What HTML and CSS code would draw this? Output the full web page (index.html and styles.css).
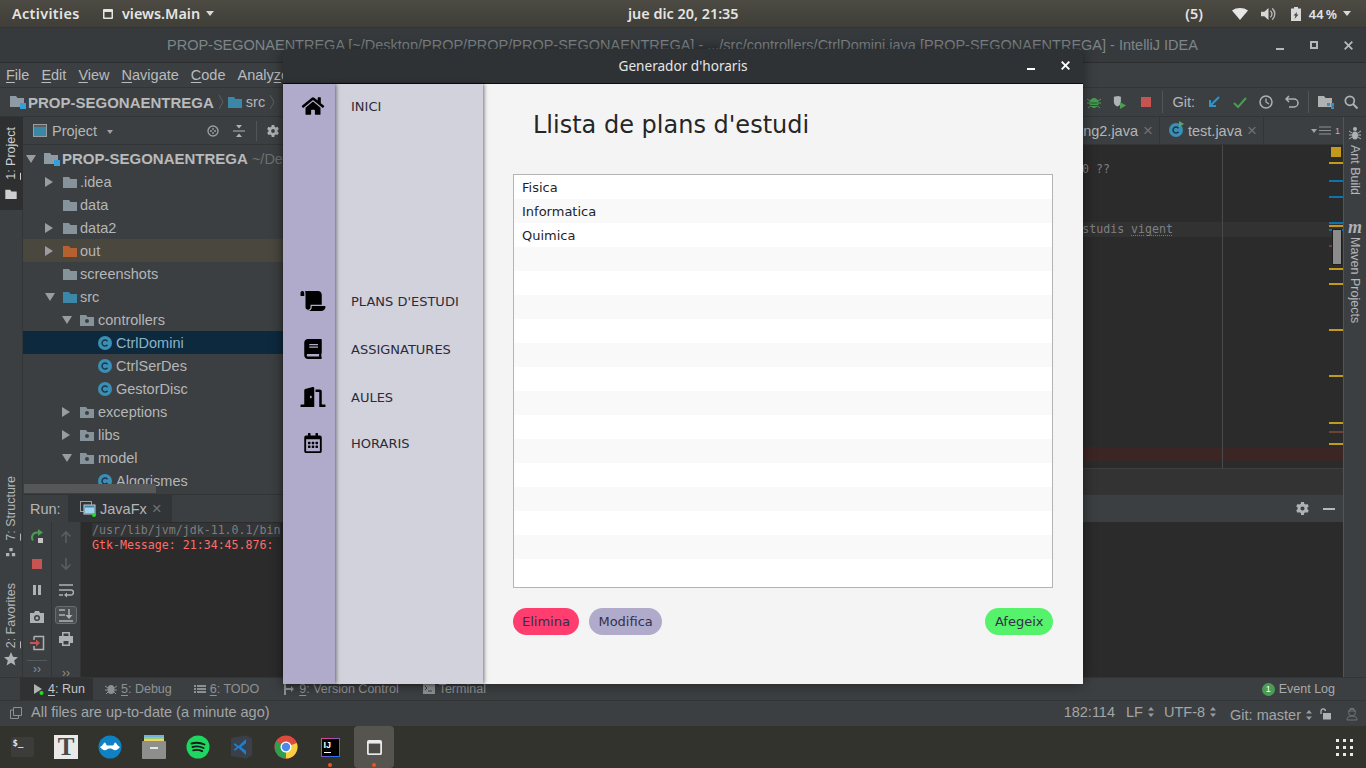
FILE: index.html
```html
<!DOCTYPE html>
<html lang="en">
<head>
	<meta charset="UTF-8">
	<title>Generador d'horaris</title>
	<link rel="stylesheet" href="styles.css">
</head>
<body>
<svg class="defs" width="0" height="0">
	<symbol id="folder" viewBox="0 0 14 12"><path d="M0 1h6l1.500 2H14v9H0z"/></symbol>
	<symbol id="pkg" viewBox="0 0 14 12"><path fill-rule="evenodd" d="M0 1h6l1.500 2H14v9H0zM7 5a2 2 0 1 0 0 4a2 2 0 0 0 0-4z"/></symbol>
	<symbol id="cls" viewBox="0 0 14 14"><circle cx="7" cy="7" r="7" fill="#3b8fb5"/><path d="M9.500 5.300A3 3 0 1 0 9.500 8.700" fill="none" stroke="#16384a" stroke-width="1.500"/></symbol>
	<symbol id="gear" viewBox="0 0 14 14"><path fill-rule="evenodd" d="M5.500 0h3l.4 2 1.500.8 1.900-.7 1.500 2.600-1.500 1.300v1.800l1.500 1.300-1.500 2.600-1.900-.7-1.500.8-.4 2.200h-3l-.4-2.200-1.500-.8-1.900.7L.2 9.100l1.500-1.300V6L.2 4.700l1.500-2.600 1.900.7 1.500-.8zM7 4.800a2.200 2.200 0 1 0 0 4.400a2.200 2.200 0 0 0 0-4.400z"/></symbol>
	<symbol id="updown" viewBox="0 0 6 10"><path d="M3 0l3 3.500H0zM3 10L0 6.500h6z"/></symbol>
</svg>

<div class="desktop">
	<header class="topbar">
		<div class="top-left">
			<span class="activities">Activities</span>
			<svg class="top-win" viewBox="0 0 10 10"><path fill-rule="evenodd" d="M1 0h8a1 1 0 0 1 1 1v8a1 1 0 0 1-1 1H1a1 1 0 0 1-1-1V1a1 1 0 0 1 1-1zM1.500 3v5.500h7V3z"/></svg>
			<span class="app-name">views.Main</span>
			<span class="caret"></span>
		</div>
		<div class="clock">jue dic 20, 21:35</div>
		<div class="top-right">
			<span class="notif">(5)</span>
			<svg class="wifi" viewBox="0 0 16 12"><path d="M0 2.500C4.500-.8 11.500-.8 16 2.500L8 12z"/></svg>
			<svg class="vol" viewBox="0 0 16 14"><path d="M0 4.500h3.500L8 .5v13l-4.500-4H0z"/><path d="M10 3.500a4.500 4.500 0 0 1 0 7M12 1a8 8 0 0 1 0 12" fill="none" stroke="#e6e6e6" stroke-width="1.500" opacity=".7"/></svg>
			<svg class="batt" viewBox="0 0 10 14"><path fill-rule="evenodd" d="M3 0h4v1.500h3V14H0V1.500h3zM6 5L2.500 8.500h2L3.500 12 7.500 7.500h-2z"/></svg>
			<span class="percent">44 %</span>
			<span class="caret"></span>
		</div>
	</header>

	<div class="ide">
		<div class="ide-title">PROP-SEGONAENTREGA [~/Desktop/PROP/PROP/PROP-SEGONAENTREGA] - .../src/controllers/CtrlDomini.java [PROP-SEGONAENTREGA] - IntelliJ IDEA
			<div class="win-btns">
				<span class="wb-min"></span>
				<span class="wb-max"></span>
				<svg class="wb-close" viewBox="0 0 9 9"><path d="M.7.7l7.600 7.600M8.300.7L.7 8.300" stroke="#b5b8ba" stroke-width="1.800"/></svg>
			</div>
		</div>

		<nav class="menubar">
			<span><u>F</u>ile</span><span><u>E</u>dit</span><span><u>V</u>iew</span><span><u>N</u>avigate</span><span><u>C</u>ode</span><span>Analy<u>z</u>e</span>
		</nav>

		<div class="navbar">
			<svg class="nav-folder" viewBox="0 0 16 14"><use href="#folder" width="14" height="12" fill="#8f9ba3"/><rect x="10" y="8" width="6" height="6" fill="#389fd6"/></svg>
			<b class="crumb-root">PROP-SEGONAENTREGA</b>
			<svg class="chev" viewBox="0 0 6 16"><path d="M1 1l4 7-4 7" fill="none" stroke="#5c5f61"/></svg>
			<svg class="nav-src" viewBox="0 0 14 12"><use href="#folder" fill="#3b87a8"/></svg>
			<span class="crumb">src</span>
			<svg class="chev" viewBox="0 0 6 16"><path d="M1 1l4 7-4 7" fill="none" stroke="#5c5f61"/></svg>
			<div class="nav-tools">
				<svg viewBox="0 0 14 14"><ellipse cx="7" cy="8" rx="4.500" ry="5" fill="#499c54"/><path d="M0 4l3 2M14 4l-3 2M0 8h3M14 8h-3M1 13l2.500-2M13 13l-2.500-2" stroke="#499c54"/><path d="M3.500 8h7M3.500 10.500h7" stroke="#2f4f34"/></svg>
				<svg viewBox="0 0 16 16"><path d="M1 2l5-1 3 1v6c0 3-3 5-4 5s-4-2-4-5z" fill="#b0b2b4"/><path d="M8 8l7 4-7 4z" fill="#499c54"/></svg>
				<svg viewBox="0 0 14 14"><rect x="2" y="2" width="10" height="10" fill="#c75450"/></svg>
				<i class="tool-sep"></i>
				<span class="git-label">Git:</span>
				<svg viewBox="0 0 14 14"><path d="M12 2L3 11M3 5v6h6" fill="none" stroke="#3592c4" stroke-width="2"/></svg>
				<svg viewBox="0 0 14 14"><path d="M1 8l4 4 8-9" fill="none" stroke="#499c54" stroke-width="2"/></svg>
				<svg viewBox="0 0 14 14"><circle cx="7" cy="7" r="6" fill="none" stroke="#afb1b3" stroke-width="1.500"/><path d="M7 3.500V7l3 2" fill="none" stroke="#afb1b3" stroke-width="1.300"/></svg>
				<svg viewBox="0 0 14 14"><path d="M4 1L1 4l3 3M1 4h8a4 4 0 0 1 0 8H4" fill="none" stroke="#afb1b3" stroke-width="1.500"/></svg>
				<i class="tool-sep"></i>
				<svg class="tool-wide" viewBox="0 0 16 14"><use href="#folder" width="14" height="12" fill="#afb1b3"/><path d="M9 8h3v3H9zM13 8h3v3h-3zM13 11.500h3V14h-3z" fill="#3592c4"/></svg>
				<svg viewBox="0 0 14 14"><circle cx="5.800" cy="5.800" r="4.500" fill="none" stroke="#afb1b3" stroke-width="1.700"/><path d="M9 9l4.500 4.500" stroke="#afb1b3" stroke-width="2"/></svg>
			</div>
		</div>

		<div class="ide-main">
			<aside class="strip strip-left">
				<div class="side-tab active">
					<span class="vtext"><u>1</u>: Project</span>
					<svg class="side-ico" viewBox="0 0 14 12"><use href="#folder" fill="#cfcfcf"/></svg>
				</div>
				<div class="side-bottom">
					<div class="side-tab tab-structure">
						<span class="vtext"><u>7</u>: Structure</span>
						<svg class="side-ico" viewBox="0 0 12 12"><path d="M4 0h4v4H4zM0 6h4v4H0zM7 6h4v4H7z" fill="#afb1b3"/></svg>
					</div>
					<div class="side-tab tab-fav">
						<span class="vtext"><u>2</u>: Favorites</span>
						<svg class="side-star" viewBox="0 0 14 14"><path d="M7 0l2 4.800 5 .4-3.800 3.300 1.200 5L7 10.800 2.600 13.500l1.200-5L0 5.200l5-.4z" fill="#afb1b3"/></svg>
					</div>
				</div>
			</aside>

			<div class="center">
				<div class="upper">
					<section class="project">
						<div class="project-head">
							<svg class="proj-ico" viewBox="0 0 14 13"><rect x=".5" y=".5" width="13" height="12" fill="#3b87a8" stroke="#9a9da0"/><path d="M1 1h12v2H1z" fill="#5a5d5f"/></svg>
							<span>Project</span>
							<span class="mini-caret"></span>
							<div class="project-tools">
								<svg viewBox="0 0 12 12"><circle cx="6" cy="6" r="5" fill="none" stroke="#9a9da0" stroke-width="1.400"/><path d="M6 3v2M6 7v2M3 6h2M7 6h2" stroke="#9a9da0" stroke-width="1.400"/></svg>
								<svg viewBox="0 0 12 12"><path d="M0 6h12" stroke="#afb1b3"/><path d="M3 0l3 3.500L9 0zM3 12l3-3.500L9 12zM1 2h10M1 10h10" fill="#afb1b3" stroke="none"/></svg>
								<i class="proj-sep"></i>
								<svg viewBox="0 0 14 14"><use href="#gear" fill="#afb1b3"/></svg>
							</div>
						</div>
						<div class="tree">
							<div class="row lv0"><i class="arrow down"></i><svg class="fld" viewBox="0 0 16 14"><use href="#folder" width="14" height="12" fill="#8f9ba3"/><rect x="10" y="8" width="6" height="6" fill="#389fd6"/></svg><b>PROP-SEGONAENTREGA</b><span class="dim">&nbsp;~/Desktop/PROP</span></div>
							<div class="row lv1"><i class="arrow"></i><svg class="fld" viewBox="0 0 14 12"><use href="#folder" fill="#87939a"/></svg><span>.idea</span></div>
							<div class="row lv1"><i class="arrow none"></i><svg class="fld" viewBox="0 0 14 12"><use href="#folder" fill="#87939a"/></svg><span>data</span></div>
							<div class="row lv1"><i class="arrow"></i><svg class="fld" viewBox="0 0 14 12"><use href="#folder" fill="#87939a"/></svg><span>data2</span></div>
							<div class="row lv1 excluded"><i class="arrow"></i><svg class="fld" viewBox="0 0 14 12"><use href="#folder" fill="#b4602f"/></svg><span>out</span></div>
							<div class="row lv1"><i class="arrow none"></i><svg class="fld" viewBox="0 0 14 12"><use href="#folder" fill="#87939a"/></svg><span>screenshots</span></div>
							<div class="row lv1"><i class="arrow down"></i><svg class="fld" viewBox="0 0 14 12"><use href="#folder" fill="#3b87a8"/></svg><span>src</span></div>
							<div class="row lv2"><i class="arrow down"></i><svg class="fld" viewBox="0 0 14 12"><use href="#pkg" fill="#87939a"/></svg><span>controllers</span></div>
							<div class="row lv3 selected"><i class="arrow none"></i><svg class="fld" viewBox="0 0 14 14"><use href="#cls"/></svg><span>CtrlDomini</span></div>
							<div class="row lv3"><i class="arrow none"></i><svg class="fld" viewBox="0 0 14 14"><use href="#cls"/></svg><span>CtrlSerDes</span></div>
							<div class="row lv3"><i class="arrow none"></i><svg class="fld" viewBox="0 0 14 14"><use href="#cls"/></svg><span>GestorDisc</span></div>
							<div class="row lv2"><i class="arrow"></i><svg class="fld" viewBox="0 0 14 12"><use href="#pkg" fill="#87939a"/></svg><span>exceptions</span></div>
							<div class="row lv2"><i class="arrow"></i><svg class="fld" viewBox="0 0 14 12"><use href="#pkg" fill="#87939a"/></svg><span>libs</span></div>
							<div class="row lv2"><i class="arrow down"></i><svg class="fld" viewBox="0 0 14 12"><use href="#pkg" fill="#87939a"/></svg><span>model</span></div>
							<div class="row lv3"><i class="arrow none"></i><svg class="fld" viewBox="0 0 14 14"><use href="#cls"/></svg><span>Algorismes</span></div>
						</div>
						<div class="tree-scroll"></div>
					</section>

					<section class="editor">
						<div class="tabs">
							<div class="tab tab-ng"><span>SerDesPlanning2.java</span><i class="tab-x">×</i></div>
							<div class="tab tab-test">
								<svg class="tab-ico" viewBox="0 0 16 16"><circle cx="7" cy="9" r="7" fill="#3b8fb5"/><path d="M9.500 7.300A3 3 0 1 0 9.500 10.700" fill="none" stroke="#16384a" stroke-width="1.500"/><path d="M10 0l5 3-5 3z" fill="#59a869"/></svg>
								<span>test.java</span><i class="tab-x">×</i>
							</div>
							<div class="tab-list">
								<span class="mini-caret"></span>
								<svg viewBox="0 0 12 9"><path d="M0 1h12M0 4.500h12M0 8h12" stroke="#8d8f91"/></svg>
								<small>1</small>
							</div>
						</div>
						<div class="code">
							<div class="line">return getPlaEstudis().size() == 0 ??</div>
							<div class="line current">// retorna el pla d'estudis <span class="typo">vigent</span></div>
							<div class="line error"></div>
							<div class="margin-line"></div>
							<div class="stripe">
								<i class="mark square"></i>
								<i class="mark y" style="top:17px"></i>
								<i class="mark b" style="top:35px"></i>
								<i class="mark b" style="top:51px"></i>
								<i class="mark b" style="top:77px"></i>
								<i class="mark y" style="top:80px"></i>
								<i class="mark b" style="top:84px"></i>
								<i class="mark br short" style="top:100px"></i>
								<i class="mark y" style="top:123px"></i>
								<i class="mark y" style="top:138px"></i>
								<i class="mark y" style="top:184px"></i>
								<i class="mark y" style="top:230px"></i>
								<i class="mark y" style="top:277px"></i>
								<i class="mark br" style="top:286px"></i>
								<i class="mark y" style="top:298px"></i>
								<i class="thumb"></i>
							</div>
						</div>
						<div class="editor-foot"></div>
					</section>
				</div>

				<section class="lower">
					<div class="run-head">
						<span class="run-label">Run:</span>
						<div class="run-tab">
							<svg class="run-tab-ico" viewBox="0 0 16 16"><rect x=".5" y=".5" width="11" height="10" fill="none" stroke="#9a9da0"/><rect x="4" y="4" width="11" height="9" fill="#3b87a8" stroke="#c8c8c8"/><rect x="5" y="6.500" width="9" height="5.500" fill="#9fd3ef"/><circle cx="14" cy="14" r="2" fill="#22e01d"/></svg>
							<span>JavaFx</span><i class="tab-x">×</i>
						</div>
						<div class="run-tools">
							<svg viewBox="0 0 14 14"><use href="#gear" fill="#afb1b3"/></svg>
							<i class="dash"></i>
						</div>
					</div>
					<div class="run-body">
						<div class="run-col">
							<svg viewBox="0 0 16 16"><path d="M11 3.500H8a5 5 0 0 0-4 8" fill="none" stroke="#499c54" stroke-width="2"/><path d="M9 0l5 3.500L9 7z" fill="#499c54"/><rect x="9" y="9" width="5" height="5" fill="#c4c4c4"/></svg>
							<svg viewBox="0 0 16 16"><rect x="3" y="3" width="10" height="10" fill="#c75450"/></svg>
							<svg viewBox="0 0 16 16"><path d="M4 3h3v10H4zM9 3h3v10H9z" fill="#afb1b3"/></svg>
							<svg viewBox="0 0 16 16"><path fill-rule="evenodd" d="M1 4h4l1-2h4l1 2h4v10H1zM8 6a3 3 0 1 0 0 6a3 3 0 0 0 0-6z" fill="#afb1b3"/><circle cx="8" cy="9" r="1.500" fill="#afb1b3"/></svg>
							<svg viewBox="0 0 16 16"><path d="M5 1.500h9.500v13H5V11M5 5V1.500" fill="none" stroke="#afb1b3" stroke-width="1.500"/><path d="M1 8h8" stroke="#c75450" stroke-width="2"/><path d="M7 4.500L11 8l-4 3.500z" fill="#c75450"/></svg>
							<i class="col-sep"></i>
							<span class="more">››</span>
						</div>
						<div class="run-col">
							<svg viewBox="0 0 16 16"><path d="M8 14V3M3.500 7.500L8 3l4.500 4.500" fill="none" stroke="#5b5e60" stroke-width="1.600"/></svg>
							<svg viewBox="0 0 16 16"><path d="M8 2v11M3.500 8.500L8 13l4.500-4.500" fill="none" stroke="#5b5e60" stroke-width="1.600"/></svg>
							<svg viewBox="0 0 16 16"><path d="M1 3h14M1 8h12a2.500 2.500 0 0 1 0 5H8M1 13h4" fill="none" stroke="#afb1b3" stroke-width="1.500"/><path d="M9 10.500L6 13l3 2.500z" fill="#afb1b3"/></svg>
							<div class="run-active"><svg viewBox="0 0 16 16"><path d="M1 3h6M1 8h6M1 14h14M11 2v8" fill="none" stroke="#afb1b3" stroke-width="1.500"/><path d="M7.500 8h7L11 12z" fill="#afb1b3"/></svg></div>
							<svg viewBox="0 0 16 16"><path fill-rule="evenodd" d="M4 1h8v4h3v7h-3v3H4v-3H1V5h3zM5.500 2.500V5h5V2.500zM5.500 10v3.500h5V10z" fill="#afb1b3"/></svg>
							<span class="more second">››</span>
						</div>
						<div class="console">
							<div><span class="cmd">/usr/lib/jvm/jdk-11.0.1/bin</span></div>
							<div class="err">Gtk-Message: 21:34:45.876:</div>
						</div>
					</div>
				</section>
			</div>

			<aside class="strip strip-right">
				<svg class="ant" viewBox="0 0 12 14"><ellipse cx="6" cy="3" rx="2" ry="2" fill="#afb1b3"/><ellipse cx="6" cy="9.500" rx="3" ry="4" fill="#afb1b3"/><path d="M0 5l3 2M12 5L9 7M0 9h3M12 9H9M0 13l3-2M12 13l-3-2" stroke="#afb1b3"/></svg>
				<span class="vtext right">Ant Build</span>
				<i class="maven">m</i>
				<span class="vtext right">Maven Projects</span>
			</aside>
		</div>

		<div class="toolbar">
			<div class="tb-item tb-run">
				<svg viewBox="0 0 12 12"><path d="M2 1l8 5-8 5z" fill="#afb1b3"/><circle cx="9.500" cy="10" r="2" fill="#22e01d"/></svg>
				<span><u>4</u>: Run</span>
			</div>
			<div class="tb-item tb-debug">
				<svg viewBox="0 0 12 12"><ellipse cx="6" cy="6.500" rx="3.500" ry="4.500" fill="#8d8f91"/><path d="M0 3l3 2M12 3L9 5M0 7h3M12 7H9M1 11l2-2M11 11L9 9" stroke="#8d8f91"/></svg>
				<span><u>5</u>: Debug</span>
			</div>
			<div class="tb-item tb-todo">
				<svg viewBox="0 0 12 12"><path d="M0 2h2v2H0zM0 5h2v2H0zM0 8h2v2H0zM3 2h9v2H3zM3 5h9v2H3zM3 8h9v2H3z" fill="#8d8f91"/></svg>
				<span><u>6</u>: TODO</span>
			</div>
			<div class="tb-item tb-vcs">
				<svg viewBox="0 0 12 12"><path d="M1 0h2v12H1zM3 5h5V3l3 3-3 3V7H3z" fill="#8d8f91"/></svg>
				<span><u>9</u>: Version Control</span>
			</div>
			<div class="tb-item tb-term">
				<svg viewBox="0 0 12 12"><rect width="12" height="11" fill="#8d8f91"/><path d="M2 3l2 2-2 2M5 8h4" fill="none" stroke="#3c3f41"/></svg>
				<span>Terminal</span>
			</div>
			<div class="tb-item tb-log">
				<span class="log-badge">1</span>
				<span>Event Log</span>
			</div>
		</div>

		<footer class="status">
			<svg class="status-ico" viewBox="0 0 12 12"><path d="M3.500.5h8v8h-8zM3.500 3H.5v8.500h8V9" fill="none" stroke="#8d8f91"/></svg>
			<span class="status-msg">All files are up-to-date (a minute ago)</span>
			<div class="status-right">
				<span class="st-pos">182:114</span>
				<span class="st-lf">LF <svg class="ud" viewBox="0 0 6 10"><use href="#updown" fill="#9a9da0"/></svg></span>
				<span class="st-enc">UTF-8 <svg class="ud" viewBox="0 0 6 10"><use href="#updown" fill="#9a9da0"/></svg></span>
				<span class="st-git">Git: master <svg class="ud" viewBox="0 0 6 10"><use href="#updown" fill="#9a9da0"/></svg></span>
				<svg class="st-lock" viewBox="0 0 12 12"><path d="M1 6V3a2.200 2.200 0 0 1 4.400 0" fill="none" stroke="#afb1b3" stroke-width="1.300"/><rect x="3" y="5" width="8" height="6.500" fill="#afb1b3"/></svg>
				<svg class="st-hector" viewBox="0 0 12 14"><circle cx="6" cy="5.500" r="3.500" fill="none" stroke="#6f7274"/><path d="M2 4h8M1 13c0-3 2-4 5-4s5 1 5 4zM4 1.500h4" fill="none" stroke="#6f7274"/></svg>
			</div>
		</footer>
	</div>

	<div class="dock">
		<div class="dock-item"><div class="d-term"><span>$_</span></div></div>
		<div class="dock-item"><div class="d-type"><span>T</span></div></div>
		<div class="dock-item"><svg viewBox="0 0 24 24"><circle cx="12" cy="12" r="11.500" fill="#0f82c4"/><path d="M2 12c2.500-1 4-5 5-4.500 1.500 1 1 3 2.500 3h5c1.500 0 1-2 2.500-3 1 -.5 2.500 3.500 5 4.500-2 3-5 4-7 2.500-1-.8-1.500-1-3-1s-2 .2-3 1c-2 1.500-5 .5-7-2.500z" fill="#fff"/></svg></div>
		<div class="dock-item"><svg viewBox="0 0 24 24"><rect x="2" y="0" width="20" height="2" fill="#6fb1e5"/><rect x="2" y="2" width="20" height="2" fill="#9ecb6a"/><rect x="2" y="4" width="20" height="2" fill="#f0d35f"/><rect y="6" width="24" height="18" rx="1" fill="#8e8e8c"/><rect x="8" y="12" width="8" height="2" fill="#e6e6e6"/></svg></div>
		<div class="dock-item"><svg viewBox="0 0 24 24"><circle cx="12" cy="12" r="11.500" fill="#1ed760"/><path d="M5.500 8.500c4.500-1.300 9-1 13 1M6.500 12c3.700-1 7.500-.7 11 1M7.200 15.300c3-.8 6-.6 9 .9" fill="none" stroke="#1a1a1a" stroke-width="1.900" stroke-linecap="round"/></svg></div>
		<div class="dock-item"><svg viewBox="0 0 24 24"><path d="M1 3l15-2.500 6 3v17l-6 3L1 21z" fill="#3a3f4a"/><path d="M16 4L8.500 11 5 8.200 3.500 9.200 6.800 12 3.500 14.800 5 15.800 8.500 13 16 20zM16 8.200v7.600L11 12z" fill="#1f7ecb"/></svg></div>
		<div class="dock-item"><svg viewBox="0 0 24 24"><circle cx="12" cy="12" r="11.500" fill="#dd4b3e"/><path d="M12 12L22.800 8a11.500 11.500 0 0 1-11 15.500z" fill="#f8cf3f"/><path d="M12 12L11.800 23.500A11.500 11.500 0 0 1 2.300 6.200z" fill="#2f9e4f"/><circle cx="12" cy="12" r="5.500" fill="#fff"/><circle cx="12" cy="12" r="4.200" fill="#4a88ea"/></svg></div>
		<div class="dock-item has-dot"><div class="d-idea"><div class="d-idea-in"><span>IJ</span><i></i></div></div></div>
		<div class="dock-item active has-dot"><svg class="d-win" viewBox="0 0 16 16"><path fill-rule="evenodd" d="M2 0h12a2 2 0 0 1 2 2v12a2 2 0 0 1-2 2H2a2 2 0 0 1-2-2V2a2 2 0 0 1 2-2zM2 4v10h12V4z" fill="#eaeaea"/><rect x="2" y="4" width="12" height="10" fill="#4a4a46"/></svg></div>
		<div class="apps">
			<i></i><i></i><i></i><i></i><i></i><i></i><i></i><i></i><i></i>
		</div>
	</div>

	<!-- floating app window on top of the IDE -->
	<div class="dialog">
		<div class="dlg-title">
			<span>Generador d'horaris</span>
			<i class="dlg-min"></i>
			<svg class="dlg-close" viewBox="0 0 9 9"><path d="M.7.7l7.600 7.600M8.300.7L.7 8.300" stroke="#fff" stroke-width="1.900"/></svg>
		</div>
		<div class="dlg-body">
			<div class="side-icons">
				<div class="nav-row first"><svg viewBox="0 0 576 512"><path d="M280.370 148.260L96 300.110V464a16 16 0 0 0 16 16l112.060-.29a16 16 0 0 0 15.920-16V368a16 16 0 0 1 16-16h64a16 16 0 0 1 16 16v95.640a16 16 0 0 0 16 16.050L464 480a16 16 0 0 0 16-16V300L295.670 148.260a12.190 12.190 0 0 0-15.300 0zM571.600 251.470L488 182.560V44.050a12 12 0 0 0-12-12h-56a12 12 0 0 0-12 12v72.610L318.470 43a48 48 0 0 0-61 0L4.340 251.470a12 12 0 0 0-1.600 16.900l25.500 31A12 12 0 0 0 45.150 301l235.220-193.740a12.190 12.190 0 0 1 15.300 0L530.900 301a12 12 0 0 0 16.900-1.600l25.500-31a12 12 0 0 0-1.700-16.930z"/></svg></div>
				<div class="nav-row gap"><svg viewBox="0 0 640 512"><path d="M48 0C21.530 0 0 21.530 0 48v64c0 8.840 7.160 16 16 16h80V48C96 21.530 74.470 0 48 0zm208 412.570V352h288V96c0-52.940-43.060-96-96-96H111.590C121.740 13.410 128 29.920 128 48v368c0 38.870 34.650 69.650 74.750 63.120C234.220 474 256 444.460 256 412.570zM288 384v32c0 52.930-43.060 96-96 96h336c61.860 0 112-50.140 112-112 0-8.840-7.160-16-16-16H288z"/></svg></div>
				<div class="nav-row"><svg viewBox="0 0 448 512"><path d="M448 360V24c0-13.300-10.700-24-24-24H96C43 0 0 43 0 96v320c0 53 43 96 96 96h328c13.300 0 24-10.700 24-24v-16c0-7.500-3.500-14.300-8.900-18.700-4.200-15.400-4.200-59.300 0-74.700 5.400-4.300 8.900-11.100 8.900-18.600zM128 134c0-3.300 2.700-6 6-6h212c3.300 0 6 2.700 6 6v20c0 3.300-2.700 6-6 6H134c-3.300 0-6-2.700-6-6v-20zm0 64c0-3.300 2.700-6 6-6h212c3.300 0 6 2.700 6 6v20c0 3.300-2.700 6-6 6H134c-3.300 0-6-2.700-6-6v-20zm253.400 250H96c-17.700 0-32-14.300-32-32 0-17.600 14.400-32 32-32h285.400c-1.900 17.100-1.900 46.900 0 64z"/></svg></div>
				<div class="nav-row"><svg viewBox="0 0 640 512"><path d="M624 448h-80V113.450C544 86.190 522.470 64 496 64H384v64h96v384h144c8.840 0 16-7.160 16-16v-32c0-8.840-7.160-16-16-16zM312.240 1.010l-192 49.740C105.990 54.440 96 67.700 96 82.920V448H16c-8.840 0-16 7.160-16 16v32c0 8.840 7.160 16 16 16h336V33.180c0-21.580-19.560-37.410-39.760-32.170zM264 288c-13.250 0-24-14.330-24-32s10.750-32 24-32 24 14.330 24 32-10.750 32-24 32z"/></svg></div>
				<div class="nav-row last"><svg viewBox="0 0 448 512"><path d="M148 288h-40c-6.600 0-12-5.400-12-12v-40c0-6.600 5.400-12 12-12h40c6.600 0 12 5.400 12 12v40c0 6.600-5.400 12-12 12zm108-12v-40c0-6.600-5.400-12-12-12h-40c-6.600 0-12 5.400-12 12v40c0 6.600 5.400 12 12 12h40c6.600 0 12-5.400 12-12zm96 0v-40c0-6.600-5.400-12-12-12h-40c-6.600 0-12 5.400-12 12v40c0 6.600 5.400 12 12 12h40c6.600 0 12-5.400 12-12zm-96 96v-40c0-6.600-5.400-12-12-12h-40c-6.600 0-12 5.400-12 12v40c0 6.600 5.400 12 12 12h40c6.600 0 12-5.400 12-12zm-96 0v-40c0-6.600-5.400-12-12-12h-40c-6.600 0-12 5.400-12 12v40c0 6.600 5.400 12 12 12h40c6.600 0 12-5.400 12-12zm192 0v-40c0-6.600-5.400-12-12-12h-40c-6.600 0-12 5.400-12 12v40c0 6.600 5.400 12 12 12h40c6.600 0 12-5.400 12-12zm96-260v352c0 26.500-21.500 48-48 48H48c-26.500 0-48-21.500-48-48V112c0-26.500 21.500-48 48-48h48V12c0-6.600 5.400-12 12-12h40c6.600 0 12 5.400 12 12v52h128V12c0-6.600 5.400-12 12-12h40c6.600 0 12 5.400 12 12v52h48c26.500 0 48 21.500 48 48zm-48 346V160H48v298c0 3.300 2.700 6 6 6h340c3.300 0 6-2.700 6-6z"/></svg></div>
			</div>
			<div class="side-labels">
				<div class="nav-row first">INICI</div>
				<div class="nav-row gap">PLANS D'ESTUDI</div>
				<div class="nav-row">ASSIGNATURES</div>
				<div class="nav-row">AULES</div>
				<div class="nav-row last">HORARIS</div>
			</div>
			<main class="dlg-main">
				<h1>Llista de plans d'estudi</h1>
				<ul class="plans">
					<li>Fisica</li>
					<li>Informatica</li>
					<li>Quimica</li>
					<li></li><li></li><li></li><li></li><li></li><li></li><li></li>
					<li></li><li></li><li></li><li></li><li></li><li></li><li></li>
				</ul>
				<div class="actions">
					<button class="btn btn-del">Elimina</button>
					<button class="btn btn-mod">Modifica</button>
					<button class="btn btn-add">Afegeix</button>
				</div>
			</main>
		</div>
	</div>
</div>
</body>
</html>
```

FILE: styles.css
```css
*{
	padding: 0;
	margin: 0;
	box-sizing: border-box;
}
html, body{
	width: 1366px;
	height: 768px;
	overflow: hidden;
}
body{
	font-family: "Liberation Sans", Arial, sans-serif;
	font-size: 14.500px;
	color: #b4b6b8;
	background: #33332e;
}
i{
	font-style: normal;
}
u{
	text-underline-offset: 2px;
}
svg{
	display: block;
	flex: none;
}
.defs{
	position: absolute;
}
.desktop{
	position: relative;
	width: 1366px;
	height: 768px;
	display: flex;
	flex-direction: column;
	overflow: hidden;
}

/* gnome top bar */
.topbar{
	height: 28px;
	flex: none;
	display: flex;
	align-items: center;
	position: relative;
	background: linear-gradient(#4c4a43, #3f3e38);
	border-bottom: 1px solid #34352f;
	font-family: "Noto Sans", sans-serif;
	font-weight: 600;
	font-size: 14.400px;
	color: #e4e4e2;
}
.top-left{
	display: flex;
	align-items: center;
	padding-left: 12px;
}
.activities{
	width: 91px;
	letter-spacing: .35px;
}
.top-win{
	width: 10px;
	height: 10px;
	fill: #e4e4e2;
}
.app-name{
	margin-left: 9px;
	margin-right: 6px;
}
.caret{
	width: 0;
	height: 0;
	border-left: 4.500px solid transparent;
	border-right: 4.500px solid transparent;
	border-top: 5px solid #d8d8d6;
}
.clock{
	position: absolute;
	left: 628px;
	white-space: nowrap;
}
.top-right{
	margin-left: auto;
	display: flex;
	align-items: center;
	padding-right: 15px;
}
.wifi{
	width: 16px;
	height: 12px;
	fill: #e6e6e6;
	margin-left: 29px;
}
.vol{
	width: 15px;
	height: 14px;
	fill: #d8d8d8;
	margin-left: 13px;
}
.batt{
	width: 10px;
	height: 14px;
	fill: #d8d8d8;
	margin-left: 15px;
}
.percent{
	margin-left: 8px;
	margin-right: 6px;
	font-size: 12.800px;
	word-spacing: -1px;
}

/* ide */
.ide{
	flex: 1;
	min-height: 0;
	display: flex;
	flex-direction: column;
	background: #3c3f41;
}
.ide-title{
	height: 35px;
	flex: none;
	background: #363a3d;
	color: #7f8588;
	padding-left: 167px;
	line-height: 34px;
	white-space: nowrap;
	overflow: hidden;
	display: flex;
	border-bottom: 1px solid #2b2d2e;
}
.win-btns{
	margin-left: auto;
	display: flex;
	align-items: center;
	gap: 26px;
	padding-right: 13px;
}
.wb-min{
	width: 8px;
	height: 2px;
	background: #b5b8ba;
	margin-top: 7px;
}
.wb-max{
	width: 8px;
	height: 8px;
	border: 2px solid #b5b8ba;
}
.wb-close{
	width: 9px;
	height: 9px;
}
.menubar{
	height: 25px;
	flex: none;
	display: flex;
	align-items: center;
	gap: 12px;
	padding-left: 6px;
	color: #b9bbbd;
	border-bottom: 1px solid #323536;
}
.navbar{
	height: 29px;
	flex: none;
	display: flex;
	align-items: center;
	padding-left: 10px;
	border-bottom: 1px solid #323536;
}
.nav-folder{
	width: 16px;
	height: 14px;
}
.crumb-root{
	margin-left: 2px;
	font-size: 15px;
	color: #b8babc;
}
.chev{
	width: 6px;
	height: 16px;
	margin: 0 3px 0 4px;
}
.nav-src{
	width: 14px;
	height: 12px;
	margin-left: 1px;
}
.crumb{
	margin-left: 4px;
}
.nav-tools{
	margin-left: auto;
	display: flex;
	align-items: center;
	gap: 12px;
	padding-right: 8px;
}
.nav-tools svg{
	width: 14px;
	height: 14px;
}
.nav-tools .tool-wide{
	width: 16px;
	margin-right: -2px;
}
.tool-sep{
	width: 1px;
	height: 22px;
	background: #525557;
	margin: 0 -3px;
}

.ide-main{
	flex: 1;
	min-height: 0;
	display: flex;
}
.strip{
	width: 23px;
	flex: none;
	display: flex;
	flex-direction: column;
	align-items: center;
	font-size: 12.500px;
	color: #b4b6b8;
}
.strip-left{
	border-right: 1px solid #323536;
}
.strip-right{
	border-left: 1px solid #525557;
	padding-top: 9px;
}
.vtext{
	writing-mode: vertical-rl;
	transform: rotate(180deg);
	white-space: nowrap;
}
.vtext.right{
	transform: none;
	margin-top: 5px;
}
.ant{
	width: 12px;
	height: 14px;
}
.maven{
	font-family: "Liberation Serif", serif;
	font-style: italic;
	font-weight: bold;
	font-size: 18px;
	color: #afb1b3;
	line-height: 14px;
	margin-top: 25px;
	margin-bottom: -2px;
}
.side-tab{
	width: 23px;
	display: flex;
	flex-direction: column;
	align-items: center;
}
.side-tab.active{
	background: #2d2f30;
	height: 93px;
	padding-top: 10px;
	color: #d0d0d0;
}
.side-ico{
	width: 12px;
	height: 10px;
	margin-top: 9px;
}
.tab-structure .side-ico{
	margin-top: 7px;
}
.side-star{
	width: 14px;
	height: 14px;
	margin-top: 4px;
}
.side-bottom{
	margin-top: auto;
	padding-bottom: 11px;
}
.tab-fav{
	margin-top: 25px;
}

.center{
	flex: 1;
	min-width: 0;
	display: flex;
	flex-direction: column;
}
.upper{
	height: 377px;
	flex: none;
	display: flex;
}
.project{
	width: 300px;
	flex: none;
	position: relative;
	overflow: hidden;
}
.project-head{
	height: 28px;
	display: flex;
	align-items: center;
	padding-left: 10px;
	border-bottom: 1px solid #323536;
}
.proj-ico{
	width: 14px;
	height: 13px;
	margin-right: 5px;
}
.mini-caret{
	display: inline-block;
	width: 0;
	height: 0;
	border-left: 3.500px solid transparent;
	border-right: 3.500px solid transparent;
	border-top: 4px solid #a0a2a4;
}
.project-head .mini-caret{
	margin-left: 10px;
	margin-top: 2px;
}
.project-tools{
	display: flex;
	align-items: center;
	gap: 14px;
	margin-left: 94px;
}
.project-tools svg{
	width: 12px;
	height: 12px;
}
.proj-sep{
	width: 1px;
	height: 20px;
	background: #525557;
	margin: 0 -4px 0 -3px;
}
.tree{
	padding-top: 2px;
}
.row{
	height: 23px;
	display: flex;
	align-items: center;
	white-space: nowrap;
}
.lv0{
	padding-left: 3px;
}
.lv1{
	padding-left: 22px;
}
.lv2{
	padding-left: 39px;
}
.lv3{
	padding-left: 57px;
}
.arrow{
	width: 18px;
	flex: none;
	height: 10px;
	display: block;
	position: relative;
}
.arrow::before{
	content: "";
	position: absolute;
	left: 0;
	top: 0;
	border-left: 8px solid #9a9da0;
	border-top: 5px solid transparent;
	border-bottom: 5px solid transparent;
}
.arrow.down::before{
	border-left: 5px solid transparent;
	border-right: 5px solid transparent;
	border-top: 8px solid #9a9da0;
	border-bottom: 0;
	top: 1px;
}
.arrow.none::before{
	display: none;
}
.fld{
	width: 14px;
	height: 12px;
	margin-right: 4px;
}
.lv1 .fld{
	margin-right: 3px;
}
.lv0 .fld{
	width: 16px;
	height: 14px;
	margin-right: 2px;
}
.lv3 .fld{
	width: 14px;
	height: 14px;
}
.row b{
	font-size: 15px;
	color: #b8babc;
}
.dim{
	color: #6c6f71;
}
.excluded{
	background: #4a473f;
}
.selected{
	background: #0d293e;
	color: #8ab4c8;
}
.tree-scroll{
	position: absolute;
	left: 1px;
	bottom: 1px;
	width: 132px;
	height: 9px;
	background: #555759;
}

.editor{
	flex: 1;
	min-width: 0;
	display: flex;
	flex-direction: column;
}
.tabs{
	height: 28px;
	flex: none;
	display: flex;
	justify-content: flex-end;
	border-bottom: 1px solid #323536;
}
.tab{
	display: flex;
	align-items: center;
	border-right: 1px solid #323536;
	white-space: nowrap;
}
.tab-ng{
	padding-right: 3px;
}
.tab-test{
	width: 104px;
	padding-left: 9px;
}
.tab-ico{
	width: 16px;
	height: 16px;
	margin-right: 3px;
	margin-top: -3px;
}
.tab-x{
	color: #6d7072;
	font-size: 17px;
	margin-left: 2px;
	width: 16px;
	text-align: center;
}
.tab-list{
	width: 79px;
	display: flex;
	align-items: center;
	justify-content: flex-end;
	padding-right: 3px;
	gap: 2px;
}
.tab-list svg{
	width: 12px;
	height: 9px;
}
.tab-list small{
	font-size: 9px;
	margin-left: 2px;
}
.code{
	flex: 1;
	min-height: 0;
	background: #2b2b2b;
	padding-top: 17px;
	position: relative;
	overflow: hidden;
	font-family: "DejaVu Sans Mono", monospace;
	font-size: 11.600px;
	color: #7e8082;
}
.line{
	height: 15px;
	line-height: 15px;
	white-space: pre;
	text-align: right;
	padding-right: 233px;
}
.line.current{
	background: #323232;
	margin-top: 45px;
	padding-right: 170px;
}
.line.error{
	background: #3c2625;
	margin-top: 210px;
}
.typo{
	text-decoration: underline dotted #5a8a5e;
	text-underline-offset: 2px;
}
.margin-line{
	position: absolute;
	left: 899px;
	top: 0;
	bottom: 0;
	width: 1px;
	background: #4a4a4a;
}
.stripe{
	position: absolute;
	right: 0;
	top: 0;
	bottom: 0;
	width: 14px;
}
.mark{
	position: absolute;
	left: 0;
	width: 14px;
	height: 2px;
}
.mark.y{
	background: #c49a1c;
}
.mark.b{
	background: #0d74ad;
}
.mark.br{
	background: #6b4434;
}
.mark.short{
	width: 4px;
}
.mark.square{
	left: 2px;
	top: 2px;
	width: 10px;
	height: 10px;
	background: #c49a1c;
}
.thumb{
	position: absolute;
	left: 3px;
	top: 84px;
	width: 10px;
	height: 36px;
	background: #8c8c8c;
	border: 1px solid #1f1f1f;
}
.editor-foot{
	height: 26px;
	flex: none;
	background: #333;
	border-top: 1px solid #3c3f41;
}

.lower{
	flex: 1;
	min-height: 0;
	display: flex;
	flex-direction: column;
	border-top: 1px solid #323536;
}
.run-head{
	height: 27px;
	flex: none;
	display: flex;
	align-items: center;
	padding-left: 7px;
}
.run-label{
	width: 38px;
}
.run-tab{
	width: 104px;
	height: 27px;
	background: #323537;
	display: flex;
	align-items: center;
	padding-left: 12px;
}
.run-tab-ico{
	width: 16px;
	height: 16px;
	margin-right: 4px;
}
.run-tools{
	margin-left: auto;
	display: flex;
	align-items: center;
	gap: 14px;
	padding-right: 8px;
}
.run-tools svg{
	width: 13px;
	height: 13px;
}
.dash{
	width: 12px;
	height: 2px;
	background: #b5b8ba;
}
.run-body{
	flex: 1;
	min-height: 0;
	display: flex;
}
.run-col{
	width: 29px;
	flex: none;
	display: flex;
	flex-direction: column;
	align-items: center;
	border-right: 1px solid #323536;
	padding-top: 7px;
	gap: 10.500px;
}
.run-col svg{
	width: 16px;
	height: 16px;
}
.run-active{
	width: 22px;
	height: 22px;
	margin: -3px 0;
	background: #4b4e50;
	border: 1px solid #6a6d6f;
	border-radius: 3px;
	display: flex;
	align-items: center;
	justify-content: center;
}
.col-sep{
	width: 20px;
	height: 1px;
	background: #55585a;
	margin-top: -2px;
	margin-bottom: -8px;
}
.more{
	font-size: 12px;
	line-height: 12px;
	color: #8d8f91;
}
.more.second{
	margin-top: 9px;
}
.console{
	flex: 1;
	min-width: 0;
	background: #2b2b2b;
	padding: 1px 0 0 11px;
	font-family: "DejaVu Sans Mono", monospace;
	font-size: 11.600px;
	line-height: 15px;
	white-space: nowrap;
	overflow: hidden;
}
.cmd{
	color: #7c7e80;
	background: #333537;
}
.err{
	color: #ff6b68;
}

.toolbar{
	height: 23px;
	flex: none;
	display: flex;
	align-items: center;
	border-top: 1px solid #323536;
	font-size: 12.500px;
	color: #8f9294;
}
.tb-item{
	height: 22px;
	display: flex;
	align-items: center;
	gap: 4px;
	white-space: nowrap;
}
.tb-item svg{
	width: 12px;
	height: 12px;
}
.tb-run{
	margin-left: 20px;
	width: 73px;
	padding-left: 12px;
	background: #2f3133;
	color: #c4c6c8;
}
.tb-debug{
	margin-left: 12px;
}
.tb-todo{
	margin-left: 22px;
}
.tb-vcs{
	margin-left: 24px;
}
.tb-term{
	margin-left: 24px;
}
.tb-log{
	margin-left: auto;
	padding-right: 31px;
	color: #a8aaac;
}
.log-badge{
	width: 13px;
	height: 13px;
	border-radius: 50%;
	background: #499c54;
	color: #fff;
	font-size: 9px;
	line-height: 13px;
	text-align: center;
}
.status{
	height: 26px;
	flex: none;
	display: flex;
	align-items: center;
	padding-left: 10px;
	padding-bottom: 3px;
	border-top: 1px solid #323536;
	color: #a3a5a7;
}
.status-ico{
	width: 12px;
	height: 12px;
	margin-right: 9px;
	margin-top: 2px;
}
.status-right{
	margin-left: auto;
	display: flex;
	align-items: center;
	padding-right: 8px;
}
.ud{
	display: inline-block;
	width: 6px;
	height: 10px;
	margin-left: 1px;
}
.st-lf{
	margin-left: 11px;
}
.st-enc{
	margin-left: 10px;
}
.st-git{
	margin-left: 14px;
	padding-top: 6px;
}
.st-lock{
	width: 12px;
	height: 12px;
	margin-left: 8px;
	margin-top: 3px;
}
.st-hector{
	width: 12px;
	height: 14px;
	margin-left: 14px;
	margin-top: 3px;
}

/* dock */
.dock{
	height: 42px;
	flex: none;
	display: flex;
	background: #33332e;
}
.dock-item{
	width: 44px;
	height: 42px;
	display: flex;
	align-items: center;
	justify-content: center;
	position: relative;
}
.dock-item svg{
	width: 24px;
	height: 24px;
}
.dock-item.active{
	width: 40px;
	margin-left: 2px;
	background: #55544e;
	border-radius: 4px;
}
.dock-item .d-win{
	width: 15px;
	height: 15px;
}
.has-dot::after{
	content: "";
	position: absolute;
	left: 50%;
	bottom: 1px;
	width: 4px;
	height: 4px;
	margin-left: -2px;
	border-radius: 50%;
	background: #e95420;
}
.d-term{
	width: 23px;
	height: 20px;
	background: #3c3c3a;
	border-radius: 2px;
	font-family: "DejaVu Sans Mono", monospace;
	font-size: 9px;
	font-weight: bold;
	line-height: 12px;
	padding-left: 2px;
	color: #e4e4e4;
}
.d-type{
	width: 24px;
	height: 24px;
	background: #e9e9e7;
	color: #4a4a4a;
	font-family: "Liberation Serif", serif;
	font-weight: bold;
	font-size: 25px;
	line-height: 24px;
	text-align: center;
}
.d-idea{
	width: 19px;
	height: 19px;
	padding: 1px;
	background: linear-gradient(135deg, #fc3f8c, #7c59c9 55%, #087cfa);
}
.d-idea-in{
	width: 17px;
	height: 17px;
	background: #000;
	color: #fff;
	font-size: 9px;
	font-weight: bold;
	line-height: 10px;
	padding: 1px 0 0 2px;
}
.d-idea-in i{
	display: block;
	width: 7px;
	height: 1px;
	background: #fff;
	margin-top: 2px;
}
.apps{
	margin-left: auto;
	margin-right: 13px;
	margin-top: 13px;
	width: 17px;
	height: 17px;
	display: grid;
	grid-template-columns: repeat(3, 3px);
	grid-template-rows: repeat(3, 3px);
	gap: 4px;
}
.apps i{
	background: #e8e8e8;
}

/* app window */
.dialog{
	position: absolute;
	left: 283px;
	top: 49px;
	width: 800px;
	height: 635px;
	display: flex;
	flex-direction: column;
	border-radius: 5px 5px 0 0;
	box-shadow: 0 0 14px rgba(0, 0, 0, .45);
	font-family: "DejaVu Sans", sans-serif;
	font-size: 13px;
	color: #2c2a3a;
}
.dlg-title{
	height: 35px;
	flex: none;
	display: flex;
	align-items: center;
	justify-content: center;
	position: relative;
	padding-bottom: 2px;
	background: #2e3235;
	border-radius: 5px 5px 0 0;
	border-bottom: 1px solid #0c0d0e;
	color: #e6e6e6;
	font-family: "Noto Sans", sans-serif;
	font-size: 13.600px;
}
.dlg-min{
	position: absolute;
	left: 744px;
	top: 19px;
	width: 8px;
	height: 2px;
	background: #fff;
}
.dlg-close{
	position: absolute;
	left: 778px;
	top: 12px;
	width: 9px;
	height: 9px;
}
.dlg-body{
	flex: 1;
	min-height: 0;
	display: flex;
}
.side-icons{
	width: 52px;
	flex: none;
	background: #b0abcb;
	position: relative;
	z-index: 2;
	box-shadow: 1px 0 4px rgba(0, 0, 0, .55);
}
.side-labels{
	width: 148px;
	flex: none;
	background: #d2d2dc;
	padding-left: 16px;
	position: relative;
	z-index: 1;
	box-shadow: 1px 0 4px rgba(0, 0, 0, .55);
}
.nav-row{
	height: 48px;
	display: flex;
	align-items: center;
}
.nav-row.first{
	height: 44px;
}
.nav-row.gap{
	margin-top: 149px;
}
.nav-row.last{
	height: 44px;
}
.side-icons .nav-row{
	justify-content: center;
	padding-left: 8px;
}
.side-icons svg{
	height: 20px;
	width: 26px;
}
.dlg-main{
	flex: 1;
	min-width: 0;
	background: #f4f4f4;
	padding: 0 30px;
}
.dlg-main h1{
	height: 90px;
	padding-left: 20px;
	font-weight: normal;
	font-size: 24px;
	line-height: 82px;
	color: #262626;
}
.plans{
	list-style: none;
	height: 414px;
	background: #fff;
	border: 1px solid #b4b4b4;
}
.plans li{
	height: 24px;
	line-height: 26px;
	padding-left: 8px;
	color: #1f1f2a;
}
.plans li:nth-child(even){
	background: #f9f9f9;
}
.actions{
	display: flex;
	gap: 10px;
	margin-top: 20px;
}
.btn{
	height: 27px;
	padding: 0 9px;
	border: 0;
	border-radius: 14px;
	font-family: "DejaVu Sans", sans-serif;
	font-size: 13px;
	color: #33304a;
}
.btn-del{
	background: #ff3d6e;
}
.btn-mod{
	background: #b0abcb;
	padding: 0 9.500px;
}
.btn-add{
	background: #57f26c;
	margin-left: auto;
	padding: 0 9.500px;
}
```
